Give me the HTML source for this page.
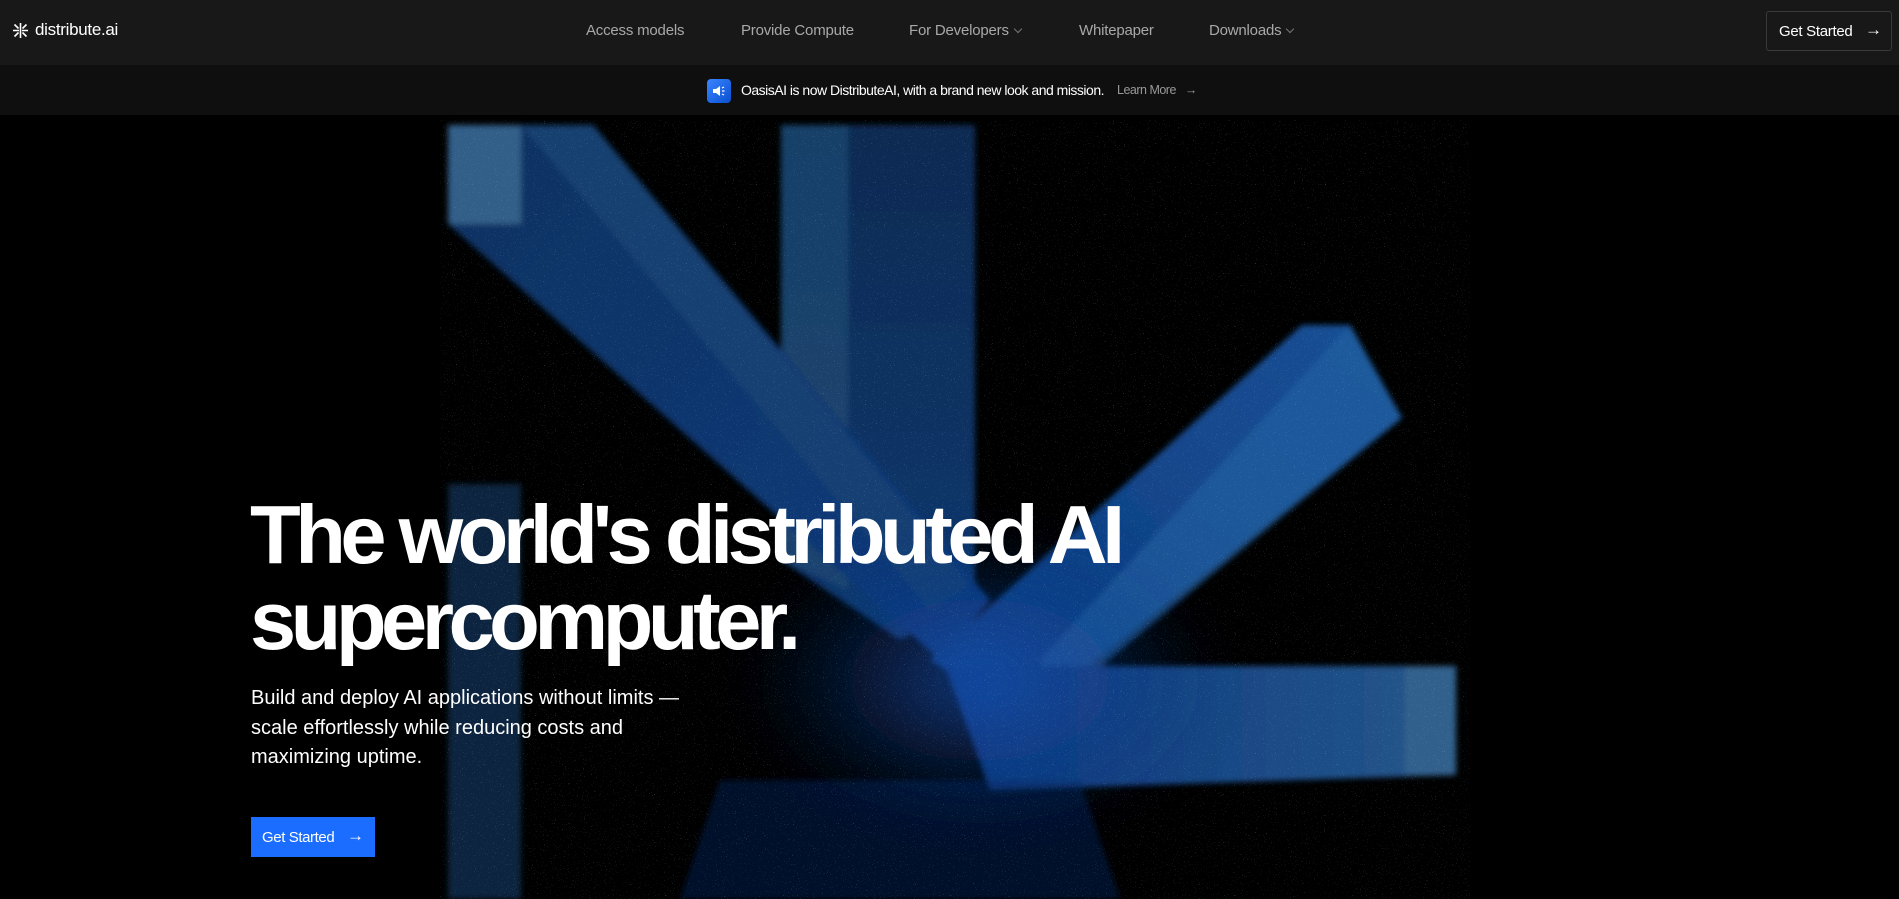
<!DOCTYPE html>
<html><head><meta charset="utf-8">
<style>
*{margin:0;padding:0;box-sizing:border-box}
body{width:1899px;height:899px;overflow:hidden;background:#000;font-family:"Liberation Sans",sans-serif;color:#fff;position:relative}
.nav{position:absolute;left:0;top:0;width:1899px;height:65px;background:#181818}
.logo{position:absolute;left:12px;top:20px;display:flex;align-items:center;gap:6px;font-size:17px;letter-spacing:-0.3px}
.nav a{position:absolute;top:22px;font-size:15px;color:#a8a8a8;white-space:nowrap;letter-spacing:-0.2px}
.chev{display:inline-block;width:6px;height:6px;border-right:1px solid #777;border-bottom:1px solid #777;transform:rotate(45deg);margin-left:6px;position:relative;top:-3px}
.btn1{position:absolute;left:1766px;top:11px;width:126px;height:40px;border:1px solid #3a3a3a;border-radius:3px;font-size:15px;color:#fff;padding:11px 0 0 12px;letter-spacing:-0.3px}
.banner{position:absolute;left:0;top:65px;width:1899px;height:50px;background:#0f0f0f}
.hero{position:absolute;left:0;top:115px;width:1899px;height:784px;overflow:hidden}
h1{position:absolute;left:250px;top:492px;font-size:83px;line-height:86px;font-weight:bold;letter-spacing:-5.5px;white-space:nowrap}
.sub{position:absolute;left:251px;top:684px;font-size:20px;line-height:29.5px;letter-spacing:0;width:450px}
.btn2{position:absolute;left:251px;top:817px;width:124px;height:40px;background:#1a6dff;font-size:15px;padding:12px 0 0 11px;letter-spacing:-0.4px}
</style></head><body>
<div class="hero">
<svg width="1899" height="784" viewBox="0 115 1899 784" style="position:absolute;left:0;top:0">
<defs>
<filter id="b"><feGaussianBlur stdDeviation="3"/></filter>
<filter id="bb"><feGaussianBlur stdDeviation="25"/></filter>
<filter id="n" x="0" y="0" width="100%" height="100%"><feTurbulence type="fractalNoise" baseFrequency="0.9" numOctaves="2" seed="3"/><feColorMatrix values="0 0 0 0 0.6 0 0 0 0 0.8 0 0 0 0 1 0 0 0 9 -6.3"/><feComposite in2="SourceGraphic" operator="in"/></filter>
<linearGradient id="g1" x1="0" y1="0" x2="1" y2="1"><stop offset="0" stop-color="#0f3260"/><stop offset="1" stop-color="#0b3a7c"/></linearGradient>
<linearGradient id="g2" x1="0" y1="0" x2="0" y2="1"><stop offset="0" stop-color="#0c2a52"/><stop offset="1" stop-color="#10386e"/></linearGradient>
<linearGradient id="g3" x1="1" y1="0" x2="0" y2="1"><stop offset="0" stop-color="#174f95"/><stop offset="1" stop-color="#0c3a7e"/></linearGradient>
<linearGradient id="g4" x1="1" y1="0" x2="0" y2="0"><stop offset="0" stop-color="#24568a"/><stop offset="1" stop-color="#0b377e"/></linearGradient>
<radialGradient id="rg"><stop offset="0" stop-color="#1a55b8" stop-opacity=".7"/><stop offset="1" stop-color="#0a2a70" stop-opacity="0"/></radialGradient>
</defs>
<g filter="url(#b)">
<polygon points="448,484 521,484 521,899 448,899" fill="#12325a" opacity=".7"/>
<polygon points="781,125 975,125 975,600 900,640 781,560" fill="url(#g2)"/>
<polygon points="781,125 848,125 848,590 781,560" fill="#1f4a72" opacity=".7"/>
<polygon points="448,125 593,125 990,600 940,660 448,224" fill="url(#g1)"/>
<polygon points="448,125 521,125 521,224 448,224" fill="#335f88"/>
<polygon points="521,125 593,125 970,585 930,610" fill="#184473" opacity=".8"/>
<polygon points="1302,325 1350,325 1402,418 1020,720 930,660" fill="url(#g3)"/>
<polygon points="1350,325 1402,418 1060,700 1040,660" fill="#245f9f" opacity=".7"/>
<polygon points="945,666 1456,666 1456,775 990,790" fill="url(#g4)"/>
<polygon points="1405,666 1456,666 1456,775 1405,775" fill="#33608c"/>
<polygon points="720,780 1080,780 1120,899 680,899" fill="#0a285e" opacity=".45"/>
</g>
<ellipse cx="980" cy="680" rx="240" ry="150" fill="url(#rg)" filter="url(#bb)"/>
<rect x="440" y="120" width="1030" height="779" fill="#fff" filter="url(#n)" opacity=".3"/>
</svg>
</div>
<div class="nav">
<div class="logo"><svg width="17" height="17" viewBox="0 0 17 17" stroke="#fff" stroke-width="1.6" fill="none"><path d="M8.5 1v15M1 8.5h6M10 8.5h6M2.5 2.5l4 4M14.5 2.5l-4 4M2.5 14.5l4-4M14.5 14.5l-4-4"/></svg><span>distribute.ai</span></div>
<a style="left:586px">Access models</a>
<a style="left:741px">Provide Compute</a>
<a style="left:909px">For Developers<span class="chev"></span></a>
<a style="left:1079px">Whitepaper</a>
<a style="left:1209px">Downloads<span class="chev"></span></a>
<div class="btn1">Get Started<span style="position:absolute;left:98px;top:8px;font-size:17px">→</span></div>
</div>
<div class="banner">
<div style="position:absolute;left:707px;top:14px;width:24px;height:24px;border-radius:4px;background:linear-gradient(135deg,#3a86ff,#0a4fd0)"><svg width="24" height="24" viewBox="0 0 24 24"><path d="M6 10h3l4-3v10l-4-3H6z" fill="#fff"/><path d="M15 9l2-1M15 12h2.5M15 15l2 1" stroke="#fff" stroke-width="1.2"/></svg></div>
<div style="position:absolute;left:741px;top:17px;font-size:14px;letter-spacing:-0.5px;color:#fff">OasisAI is now DistributeAI, with a brand new look and mission.</div>
<div style="position:absolute;left:1117px;top:18px;font-size:12.5px;letter-spacing:-0.5px;color:#999">Learn More <span style="margin-left:6px">→</span></div>
</div>
<h1>The world's distributed AI<br>supercomputer.</h1>
<div class="sub">Build and deploy AI applications without limits — scale effortlessly while reducing costs and maximizing uptime.</div>
<div class="btn2">Get Started<span style="position:absolute;left:96px;top:9px;font-size:17px">→</span></div>
</body></html>
